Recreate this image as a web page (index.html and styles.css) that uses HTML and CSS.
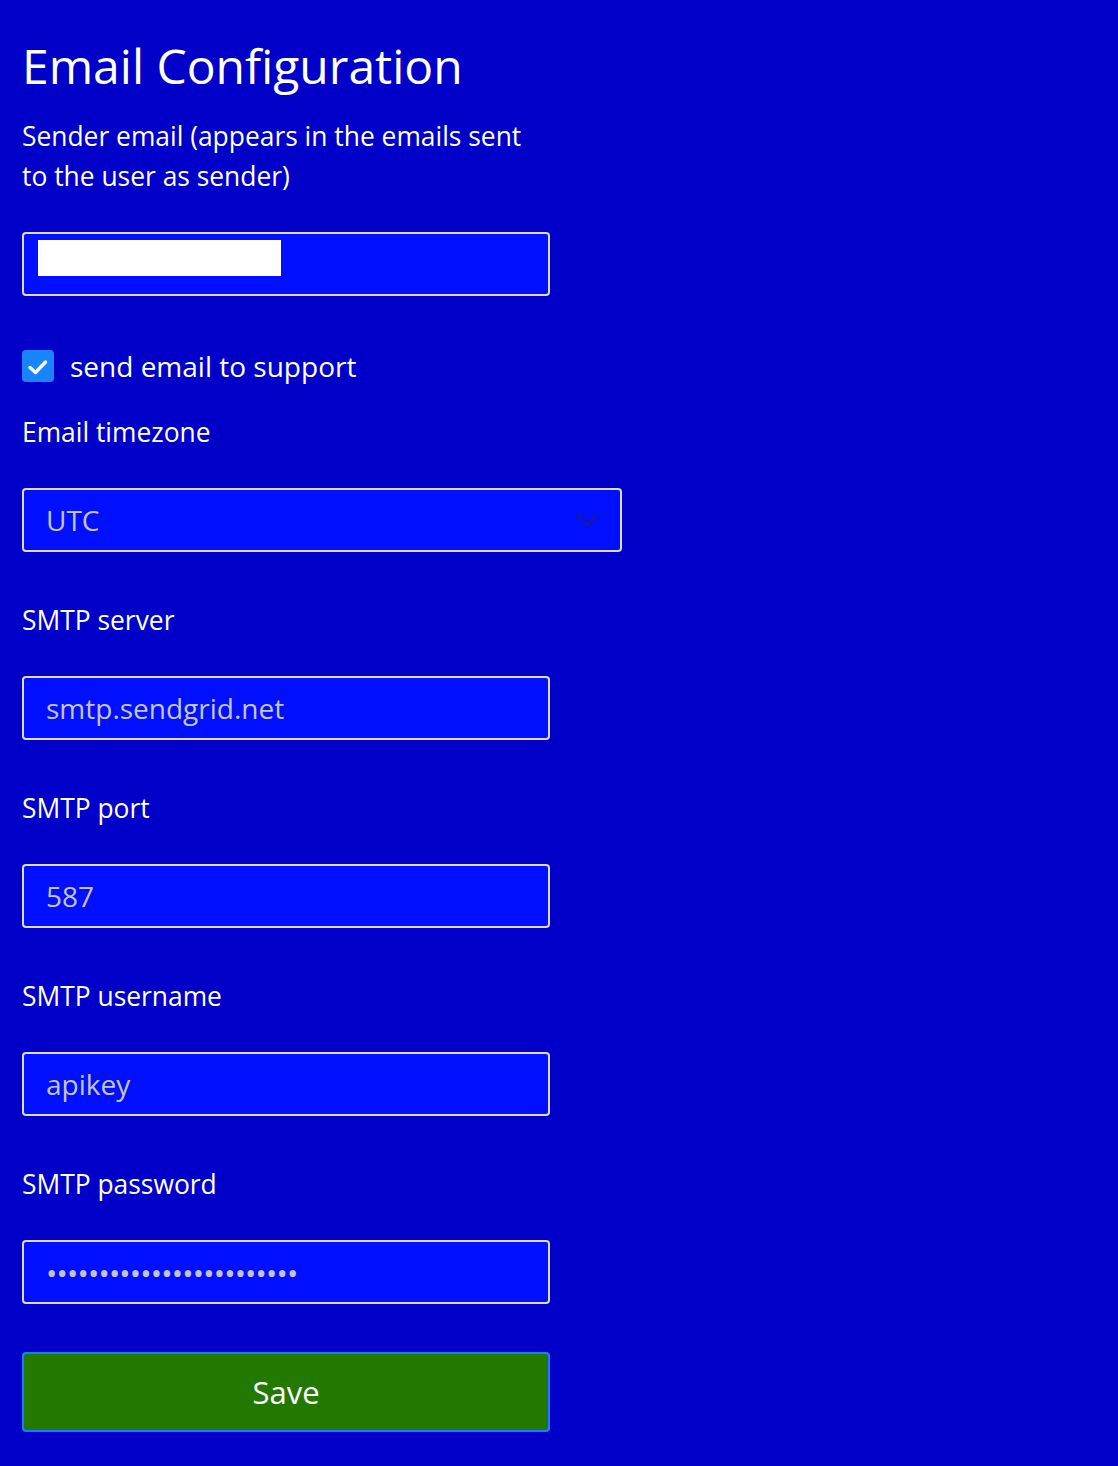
FILE: index.html
```html
<!DOCTYPE html>
<html lang="en">
<head>
    <meta charset="UTF-8">
    <meta name="viewport" content="width=device-width, initial-scale=1.0">
    <title>Email Configuration</title>
    <link rel="stylesheet" href="styles.css">
</head>
<body>
    <div class="config-container">
        <h1>Email Configuration</h1>
        <form class="config-form">
            <div class="field">
                <label class="field-label narrow">Sender email (appears in the emails sent to the user as sender)</label>
                <div class="text-input"><span class="masked"></span></div>
            </div>

            <label class="check-row">
                <span class="check-box">
                    <svg width="24" height="24" viewBox="0 0 24 24"><path d="M4 13.5 L9.5 18.5 L19.5 8" fill="none" stroke="#fff" stroke-width="3.4" stroke-linecap="round" stroke-linejoin="round"/></svg>
                </span>
                send email to support
            </label>

            <div class="field">
                <label class="field-label">Email timezone</label>
                <div class="text-input select-input">
                    <span>UTC</span>
                    <svg class="chevron" width="22" height="14" viewBox="0 0 22 14"><path d="M1 1 L11 12.5 L21 1" fill="none" stroke="#1c1c8a" stroke-width="2"/></svg>
                </div>
            </div>

            <div class="field">
                <label class="field-label">SMTP server</label>
                <div class="text-input">smtp.sendgrid.net</div>
            </div>

            <div class="field">
                <label class="field-label">SMTP port</label>
                <div class="text-input">587</div>
            </div>

            <div class="field">
                <label class="field-label">SMTP username</label>
                <div class="text-input">apikey</div>
            </div>

            <div class="field">
                <label class="field-label">SMTP password</label>
                <div class="text-input password">••••••••••••••••••••••••</div>
            </div>

            <button type="button" class="save-btn">Save</button>
        </form>
    </div>
</body>
</html>
```

FILE: styles.css
```css
body {
    font-family: "Open Sans", "Noto Sans", sans-serif;
    background-color: #0000c8;
    color: #fff;
    margin: 0;
    padding: 0;
}
.config-container {
    padding: 26px 22px 30px;
}
.config-container h1 {
    font-size: 48px;
    font-weight: 400;
    line-height: 80px;
    margin: 0 0 10px;
}
.config-form {
    display: flex;
    flex-direction: column;
}
.field {
    display: flex;
    flex-direction: column;
    gap: 36px;
    margin-bottom: 48px;
}
.field-label {
    font-size: 26.4px;
    line-height: 40px;
}
.field-label.narrow {
    max-width: 528px;
}
.text-input {
    box-sizing: border-box;
    width: 528px;
    height: 64px;
    background: #0010ff;
    border: 2px solid #dcdcdc;
    border-radius: 4px;
    color: #c4c4c4;
    font-size: 28px;
    padding: 0 22px;
    display: flex;
    align-items: center;
}
.masked {
    display: block;
    align-self: flex-start;
    width: 243px;
    height: 36px;
    background: #fff;
    margin: 6px 0 0 -8px;
}
.select-input {
    width: 600px;
    justify-content: space-between;
}
.password {
    font-size: 30px;
    letter-spacing: -0.8px;
}
.check-row {
    display: flex;
    align-items: center;
    gap: 16px;
    font-size: 28px;
    line-height: 40px;
    margin: 2px 0 26px;
}
.check-box {
    width: 32px;
    height: 32px;
    border-radius: 4px;
    background: #1a84ff;
    display: flex;
    align-items: center;
    justify-content: center;
}
.save-btn {
    width: 528px;
    height: 80px;
    background: #237800;
    border: 2px solid #1a7fff;
    border-radius: 4px;
    color: #fff;
    font-family: inherit;
    font-size: 31px;
}
```
